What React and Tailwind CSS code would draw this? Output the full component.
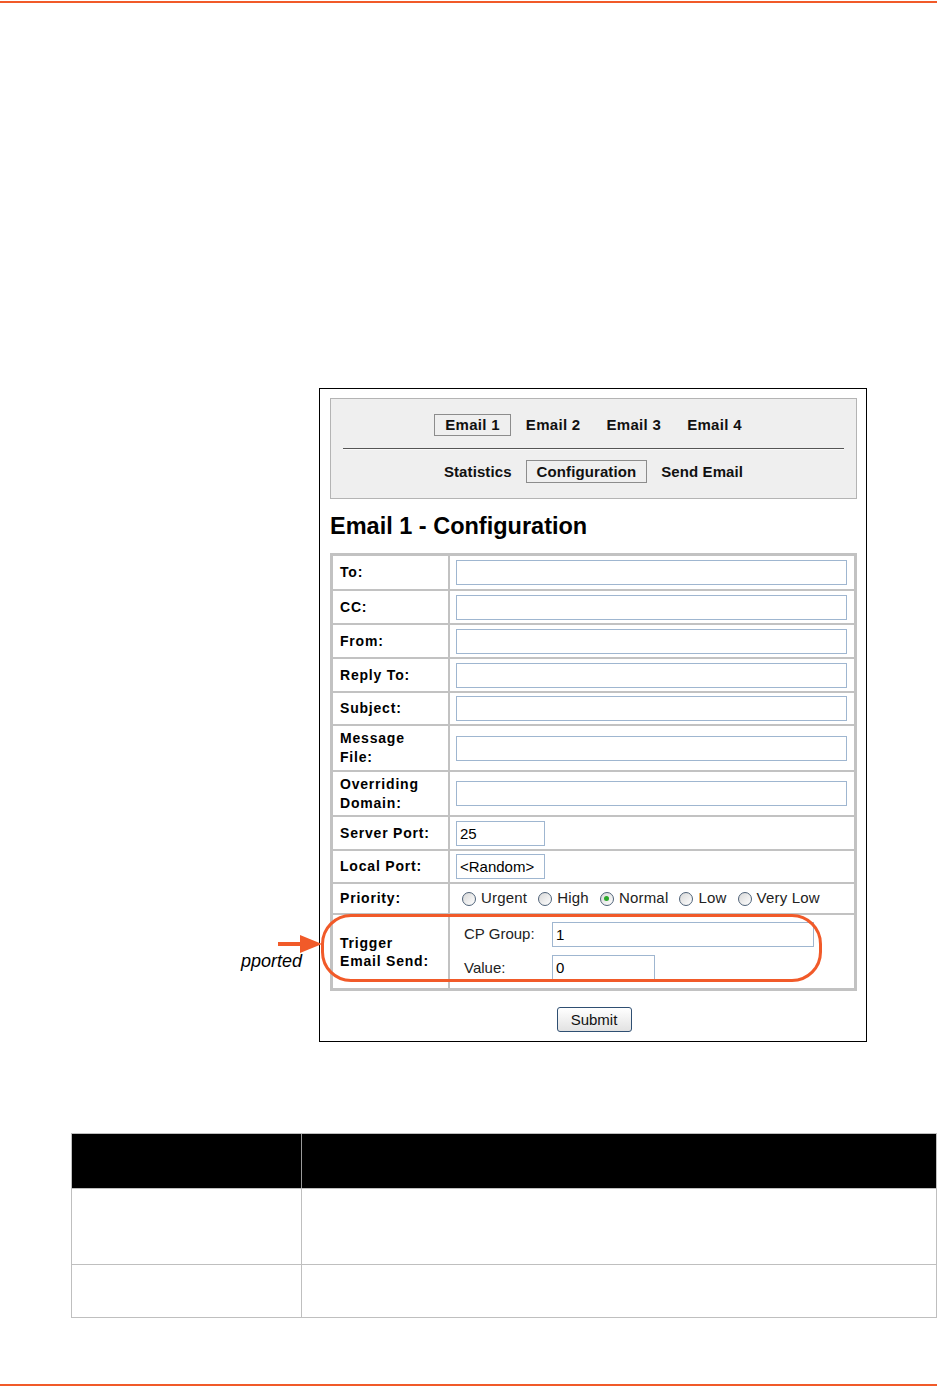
import React from 'react';

const font = { fontFamily: '"Liberation Sans", Arial, sans-serif' };

function Radio({ checked }) {
  return (
    <span className="relative inline-flex w-[14px] h-[14px] rounded-full border border-[#4f6278] bg-gradient-to-br from-[#d8d8d8] to-[#ffffff] items-center justify-center">
      {checked && <span className="w-[5px] h-[5px] rounded-full bg-[#2aa82a]" />}
    </span>
  );
}

function Field({ label, height = 'h-[32px]', children }) {
  return (
    <tr>
      <td className={`${height} w-[115px] bg-white pl-[7px] pr-1 align-middle text-[14px] font-bold tracking-[0.8px] leading-[19px] text-black`}>
        {label}
      </td>
      <td className="bg-white pl-[6px] pr-[7px] align-middle">{children}</td>
    </tr>
  );
}

function TextBox({ width = 'w-full', value = '' }) {
  return (
    <div className={`${width} h-[25px] border border-[#9fb6d0] bg-white px-[3px] text-[15px] leading-[23px] text-black`}>
      {value}
    </div>
  );
}

export default function App() {
  const priorities = ['Urgent', 'High', 'Normal', 'Low', 'Very Low'];

  return (
    <div style={font} className="w-[937px] h-[1388px] bg-white flex flex-col overflow-hidden">
      <div className="mt-[1px] h-[2px] w-full bg-[#f15a29]" />

      {/* screenshot frame */}
      <div className="relative mt-[385px] ml-[319px] w-[548px] border border-black pt-[9px] pl-[10px] pr-[8px] pb-[9px]">
        <div className="w-[527px] bg-[#efefef] border border-[#b4b4b4] pt-[15px] pb-[15px] px-[12px]">
          <div className="flex justify-center gap-1 text-[15px] font-bold tracking-[0.3px] text-[#111]">
            <span className="h-[22px] leading-[20px] px-[10px] border border-[#8c8c8c]">Email 1</span>
            <span className="h-[22px] leading-[20px] px-[10px] border border-transparent">Email 2</span>
            <span className="h-[22px] leading-[20px] px-[10px] border border-transparent">Email 3</span>
            <span className="h-[22px] leading-[20px] px-[10px] border border-transparent">Email 4</span>
          </div>
          <div className="mt-[12px] mb-[10px] border-t border-[#555] border-b border-b-[#fafafa]" />
          <div className="flex justify-center gap-[3px] text-[15px] font-bold tracking-[0.1px] text-[#111]">
            <span className="h-[23px] leading-[21px] px-[10px] border border-transparent">Statistics</span>
            <span className="h-[23px] leading-[21px] px-[10px] border border-[#8c8c8c]">Configuration</span>
            <span className="h-[23px] leading-[21px] px-[10px] border border-transparent">Send Email</span>
          </div>
        </div>

        <h1 className="mt-[13px] text-[23.5px] leading-[28px] font-bold text-black">Email 1 - Configuration</h1>

        <table className="mt-[13px] w-[527px] border border-[#c2c2c2] bg-[#c2c2c2] border-separate border-spacing-[2px]">
          <tbody>
            <Field label="To:" height="h-[33px]"><TextBox /></Field>
            <Field label="CC:"><TextBox /></Field>
            <Field label="From:"><TextBox /></Field>
            <Field label="Reply To:"><TextBox /></Field>
            <Field label="Subject:" height="h-[31px]"><TextBox /></Field>
            <Field label={<>Message<br />File:</>} height="h-[44px]"><TextBox /></Field>
            <Field label={<>Overriding<br />Domain:</>} height="h-[43px]"><TextBox /></Field>
            <Field label="Server Port:"><TextBox width="w-[89px]" value="25" /></Field>
            <Field label="Local Port:" height="h-[31px]"><TextBox width="w-[89px]" value="<Random>" /></Field>
            <tr>
              <td className="h-[29px] bg-white pl-[7px] align-middle text-[14px] font-bold tracking-[0.8px] text-black">Priority:</td>
              <td className="bg-white pl-[12px] align-middle">
                <div className="flex items-center text-[15px] tracking-[0.2px] text-[#222]">
                  {priorities.map((p) => (
                    <label key={p} className="flex items-center gap-[5px] mr-[11px]">
                      <Radio checked={p === 'Normal'} />
                      <span>{p}</span>
                    </label>
                  ))}
                </div>
              </td>
            </tr>
            <tr>
              <td className="h-[73px] bg-white pl-[7px] align-middle text-[14px] font-bold tracking-[0.8px] leading-[18px] text-black">
                Trigger<br />Email Send:
              </td>
              <td className="bg-white pl-[14px] pt-[7px] pb-[8px] align-top">
                <div className="flex flex-col gap-[8px] text-[15px] text-[#222]">
                  <div className="flex items-center">
                    <span className="w-[88px]">CP Group:</span>
                    <TextBox width="w-[262px]" value="1" />
                  </div>
                  <div className="flex items-center">
                    <span className="w-[88px] pt-[2px]">Value:</span>
                    <TextBox width="w-[103px]" value="0" />
                  </div>
                </div>
              </td>
            </tr>
          </tbody>
        </table>

        <div className="mt-[16px] flex justify-center">
          <button className="w-[75px] h-[25px] rounded-[3px] border border-[#2f4f72] bg-gradient-to-b from-[#ffffff] to-[#e2e2e2] text-[15px] leading-[22px] text-[#111]">
            Submit
          </button>
        </div>

        {/* orange callout */}
        <div className="absolute left-[1px] top-[525px] w-[501px] h-[68px] rounded-[30px] border-[3px] border-[#f15a29]" />
        <svg className="absolute left-[-43px] top-[545px]" width="46" height="20" viewBox="0 0 46 20">
          <rect x="1" y="8" width="23" height="4" fill="#f15a29" />
          <polygon points="23,1 45,10 23,19" fill="#f15a29" />
        </svg>
        <span className="absolute left-[-79px] top-[563px] text-[18px] leading-none italic text-black">pported</span>
      </div>

      {/* description table */}
      <div className="mt-[91px] ml-[71px] w-[866px] border border-[#bfbfbf]">
        <div className="grid grid-cols-[230px_1fr] h-[54px] bg-black">
          <div className="border-r border-[#9a9a9a]" />
          <div />
        </div>
        <div className="grid grid-cols-[230px_1fr] h-[76px] border-t border-[#bfbfbf]">
          <div className="border-r border-[#bfbfbf]" />
          <div />
        </div>
        <div className="grid grid-cols-[230px_1fr] h-[53px] border-t border-[#bfbfbf]">
          <div className="border-r border-[#bfbfbf]" />
          <div />
        </div>
      </div>

      <div className="mt-[66px] h-[2px] w-full bg-[#f15a29]" />
    </div>
  );
}
